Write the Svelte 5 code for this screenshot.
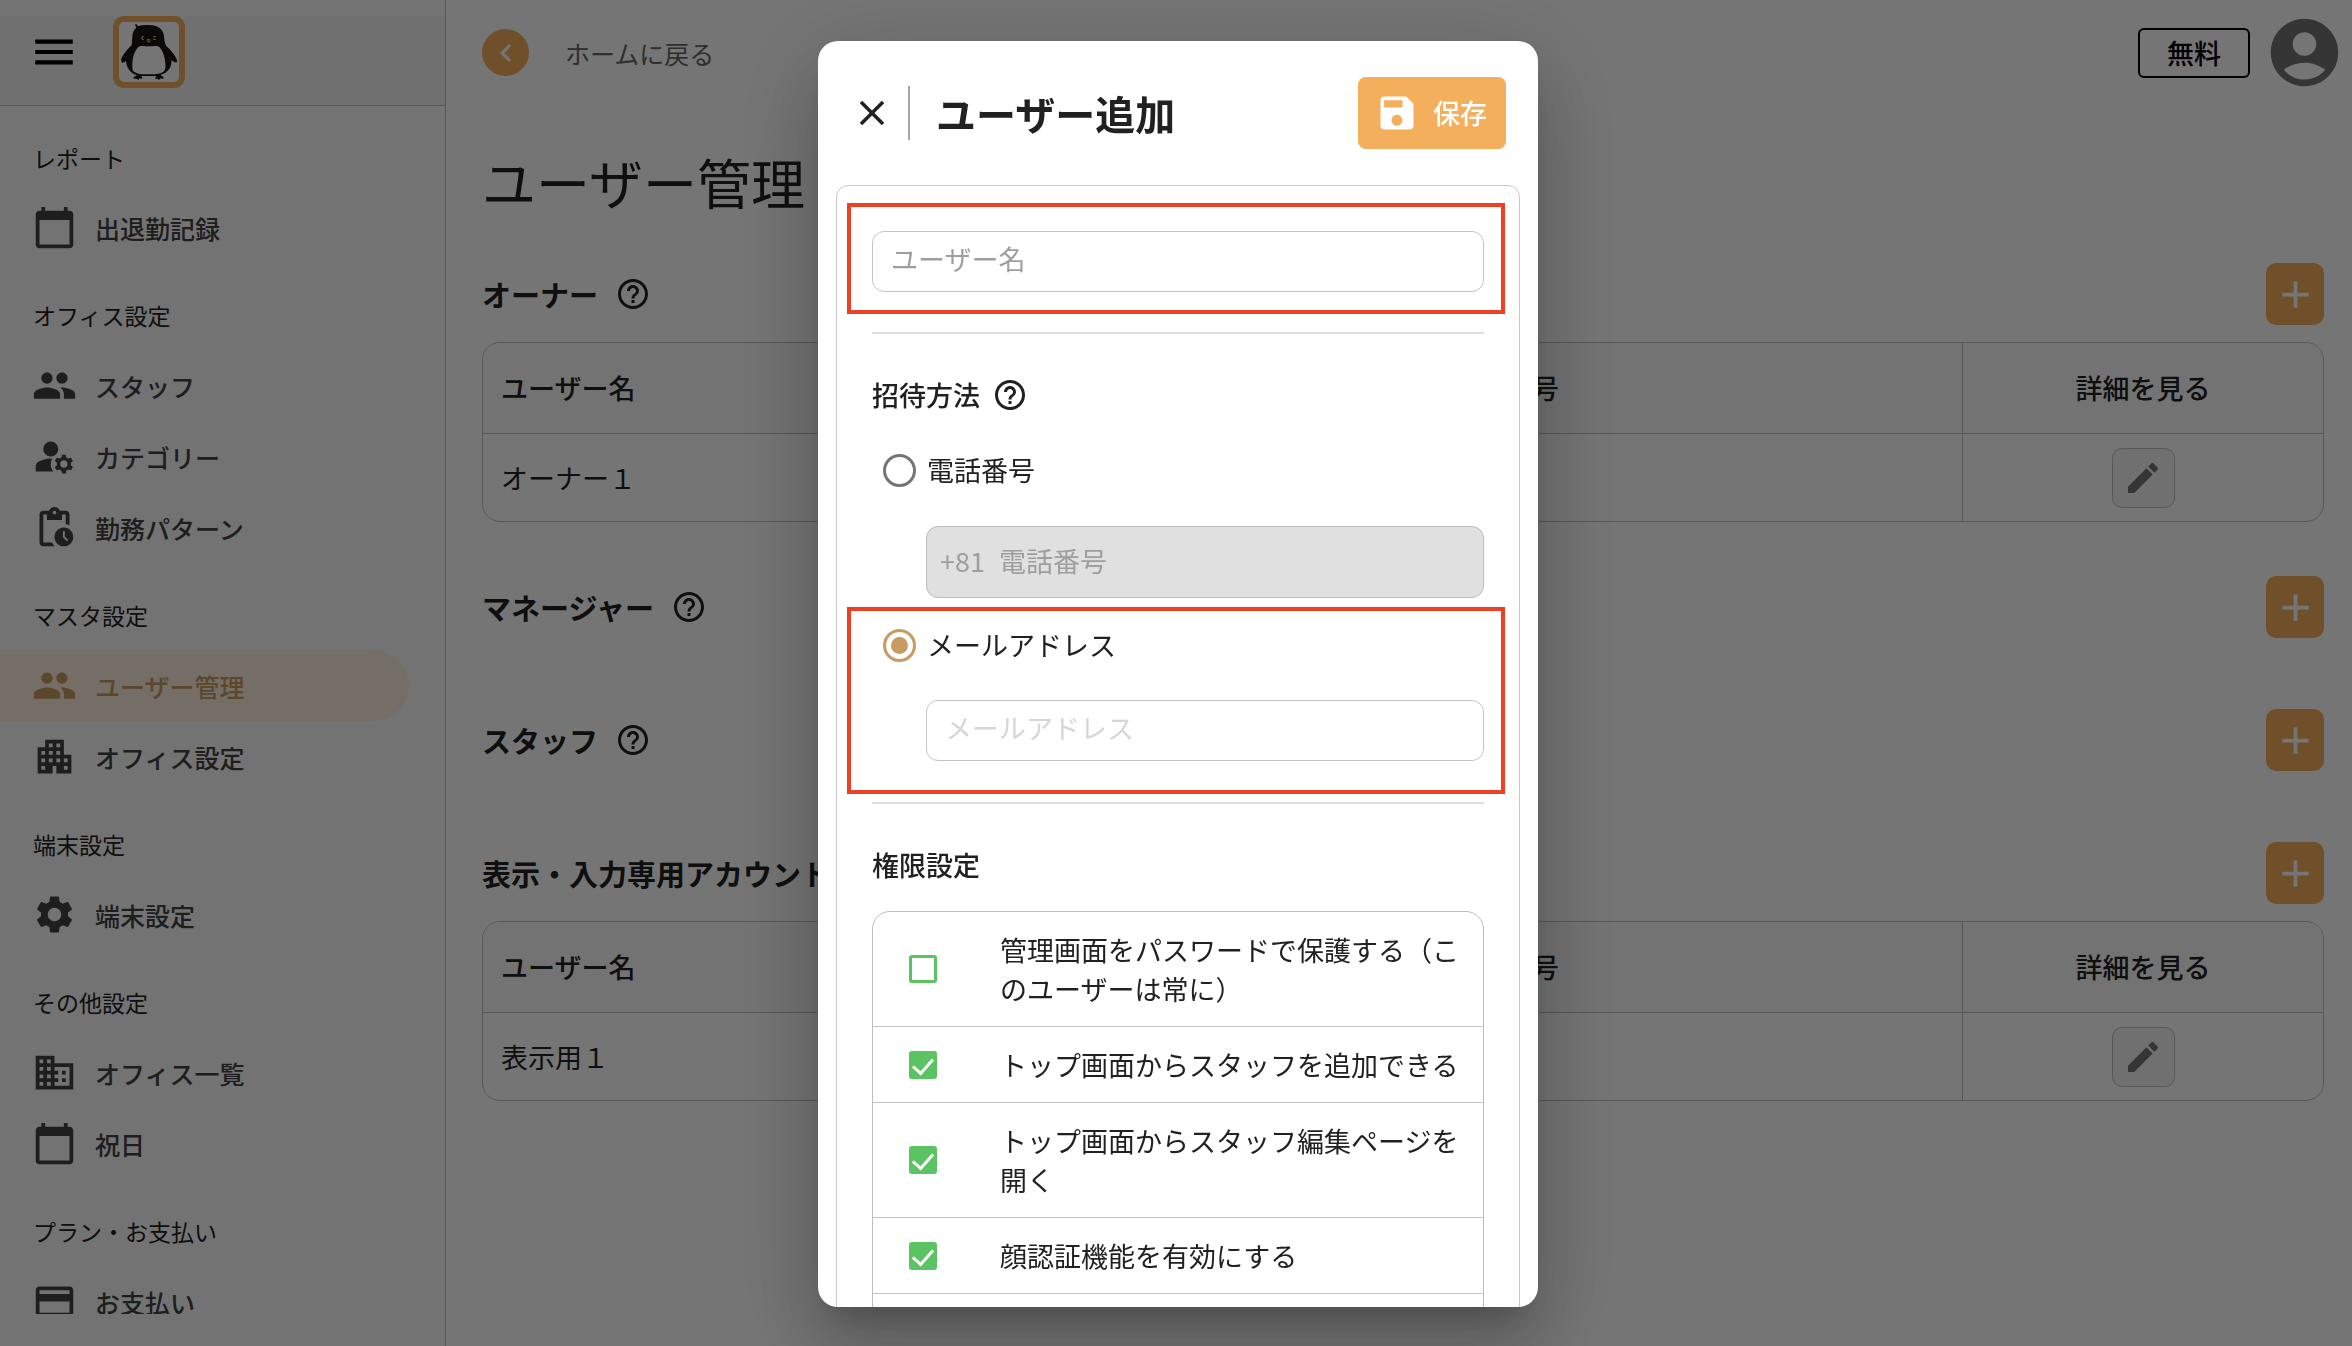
<script>
  const icons = {
    menu: 'M3 18h18v-2H3v2zm0-5h18v-2H3v2zm0-7v2h18V6H3z',
    calendar: 'M20 3h-1V1h-2v2H7V1H5v2H4c-1.1 0-2 .9-2 2v16c0 1.1.9 2 2 2h16c1.1 0 2-.9 2-2V5c0-1.1-.9-2-2-2zm0 18H4V8h16v13z',
    group: 'M16 11c1.66 0 2.99-1.34 2.99-3S17.66 5 16 5c-1.66 0-3 1.34-3 3s1.34 3 3 3zm-8 0c1.66 0 2.99-1.34 2.99-3S9.66 5 8 5C6.34 5 5 6.34 5 8s1.34 3 3 3zm0 2c-2.33 0-7 1.17-7 3.5V19h14v-2.5c0-2.33-4.67-3.5-7-3.5zm8 0c-.29 0-.62.02-.97.05 1.16.84 1.97 1.97 1.97 3.45V19h6v-2.5c0-2.33-4.67-3.5-7-3.5z',
    manage: 'M10 4a4 4 0 1 0 0 8 4 4 0 1 0 0-8zM10.67 13.02c-.22-.01-.44-.02-.67-.02-2.42 0-4.68.67-6.61 1.82-.88.52-1.39 1.5-1.39 2.53V20h9.26c-.79-1.13-1.26-2.51-1.26-4 0-1.07.25-2.07.67-2.98zM20.75 16c0-.22-.03-.42-.06-.63l1.14-1.01-1-1.73-1.45.49c-.32-.27-.68-.48-1.08-.63L18 11h-2l-.3 1.49c-.4.15-.76.36-1.08.63l-1.45-.49-1 1.73 1.14 1.01c-.03.21-.06.41-.06.63s.03.42.06.63l-1.14 1.01 1 1.73 1.45-.49c.32.27.68.48 1.08.63L16 21h2l.3-1.49c.4-.15.76-.36 1.08-.63l1.45.49 1-1.73-1.14-1.01c.03-.21.06-.41.06-.63zM17 18c-1.1 0-2-.9-2-2s.9-2 2-2 2 .9 2 2-.9 2-2 2z',
    pending: 'M17 12c-2.76 0-5 2.24-5 5s2.24 5 5 5 5-2.24 5-5-2.24-5-5-5zm1.65 7.35L16.5 17.2V14h1v2.79l1.85 1.85-.7.71zM18 3h-3.18C14.4 1.84 13.3 1 12 1s-2.4.84-2.82 2H6c-1.1 0-2 .9-2 2v15c0 1.1.9 2 2 2h6.11c-.59-.57-1.07-1.25-1.42-2H6V5h2v3h8V5h2v5.08c.71.1 1.38.31 2 .6V5c0-1.1-.9-2-2-2zm-6 2c-.55 0-1-.45-1-1s.45-1 1-1 1 .45 1 1-.45 1-1 1z',
    apartment: 'M17 11V3H7v4H3v14h8v-4h2v4h8V11h-4zM7 19H5v-2h2v2zm0-4H5v-2h2v2zm0-4H5V9h2v2zm4 4H9v-2h2v2zm0-4H9V9h2v2zm0-4H9V5h2v2zm4 8h-2v-2h2v2zm0-4h-2V9h2v2zm0-4h-2V5h2v2zm4 12h-2v-2h2v2zm0-4h-2v-2h2v2z',
    settings: 'M19.14 12.94c.04-.3.06-.61.06-.94 0-.32-.02-.64-.07-.94l2.03-1.58c.18-.14.23-.41.12-.61l-1.92-3.32c-.12-.22-.37-.29-.59-.22l-2.39.96c-.5-.38-1.03-.7-1.62-.94l-.36-2.54c-.04-.24-.24-.41-.48-.41h-3.84c-.24 0-.43.17-.47.41l-.36 2.54c-.59.24-1.13.57-1.62.94l-2.39-.96c-.22-.08-.47 0-.59.22L2.74 8.87c-.12.21-.08.47.12.61l2.03 1.58c-.05.3-.09.63-.09.94s.02.64.07.94l-2.03 1.58c-.18.14-.23.41-.12.61l1.92 3.32c.12.22.37.29.59.22l2.39-.96c.5.38 1.03.7 1.62.94l.36 2.54c.05.24.24.41.48.41h3.84c.24 0 .44-.17.47-.41l.36-2.54c.59-.24 1.13-.56 1.62-.94l2.39.96c.22.08.47 0 .59-.22l1.92-3.32c.12-.22.07-.47-.12-.61l-2.01-1.58zM12 15.6c-1.98 0-3.6-1.62-3.6-3.6s1.62-3.6 3.6-3.6 3.6 1.62 3.6 3.6-1.62 3.6-3.6 3.6z',
    business: 'M12 7V3H2v18h20V7H12zM6 19H4v-2h2v2zm0-4H4v-2h2v2zm0-4H4V9h2v2zm0-4H4V5h2v2zm4 12H8v-2h2v2zm0-4H8v-2h2v2zm0-4H8V9h2v2zm0-4H8V5h2v2zm10 12h-8v-2h2v-2h-2v-2h2v-2h-2V9h8v10zm-2-8h-2v2h2v-2zm0 4h-2v2h2v-2z',
    card: 'M20 4H4c-1.11 0-1.99.89-1.99 2L2 18c0 1.11.89 2 2 2h16c1.11 0 2-.89 2-2V6c0-1.11-.89-2-2-2zm0 14H4v-6h16v6zm0-10H4V6h16v2z',
    chevron: 'M15.41 7.41L14 6l-6 6 6 6 1.41-1.41L10.83 12z',
    account: 'M12 2C6.48 2 2 6.48 2 12s4.48 10 10 10 10-4.48 10-10S17.52 2 12 2zm0 4c1.93 0 3.5 1.57 3.5 3.5S13.93 13 12 13s-3.5-1.57-3.5-3.5S10.07 6 12 6zm0 14c-2.03 0-4.43-.82-6.14-2.88C7.55 15.8 9.68 15 12 15s4.45.8 6.14 2.12C16.43 19.18 14.03 20 12 20z',
    help: 'M11 18h2v-2h-2v2zm1-16C6.48 2 2 6.48 2 12s4.48 10 10 10 10-4.48 10-10S17.52 2 12 2zm0 18c-4.41 0-8-3.59-8-8s3.59-8 8-8 8 3.59 8 8-3.59 8-8 8zm0-14c-2.21 0-4 1.79-4 4h2c0-1.1.9-2 2-2s2 .9 2 2c0 2-3 1.75-3 5h2c0-2.25 3-2.5 3-5 0-2.21-1.79-4-4-4z',
    add: 'M19 13h-6v6h-2v-6H5v-2h6V5h2v6h6v2z',
    edit: 'M3 17.25V21h3.75L17.81 9.94l-3.75-3.75L3 17.25zM20.71 7.04c.39-.39.39-1.02 0-1.41l-2.34-2.34c-.39-.39-1.02-.39-1.41 0l-1.83 1.83 3.75 3.75 1.83-1.83z',
    close: 'M19 6.41L17.59 5 12 10.59 6.41 5 5 6.41 10.59 12 5 17.59 6.41 19 12 13.41 17.59 19 19 17.59 13.41 12z',
    save: 'M17 3H5c-1.11 0-2 .9-2 2v14c0 1.1.89 2 2 2h14c1.1 0 2-.9 2-2V7l-4-4zm-5 16c-1.66 0-3-1.34-3-3s1.34-3 3-3 3 1.34 3 3-1.34 3-3 3zm3-10H5V5h10v4z'
  };

  const nav = [
    { label: 'レポート', items: [['calendar', '出退勤記録']] },
    { label: 'オフィス設定', items: [['group', 'スタッフ'], ['manage', 'カテゴリー'], ['pending', '勤務パターン']] },
    { label: 'マスタ設定', items: [['group', 'ユーザー管理', true], ['apartment', 'オフィス設定']] },
    { label: '端末設定', items: [['settings', '端末設定']] },
    { label: 'その他設定', items: [['business', 'オフィス一覧'], ['calendar', '祝日']] },
    { label: 'プラン・お支払い', items: [['card', 'お支払い']] }
  ];

  const sections = [
    { title: 'オーナー', help: true, user: 'オーナー１' },
    { title: 'マネージャー', help: true },
    { title: 'スタッフ', help: true },
    { title: '表示・入力専用アカウント', help: false, user: '表示用１' }
  ];

  const permissions = $state([
    { text: '管理画面をパスワードで保護する（このユーザーは常に）', on: false },
    { text: 'トップ画面からスタッフを追加できる', on: true },
    { text: 'トップ画面からスタッフ編集ページを開く', on: true },
    { text: '顔認証機能を有効にする', on: true },
    { text: '', on: false }
  ]);

  let method = $state('email');
</script>

{#snippet icon(name, size)}
  <svg class="icon {size}" viewBox="0 0 24 24" aria-hidden="true"><path d={icons[name]} /></svg>
{/snippet}

<div class="app">
  <aside class="sidebar">
    <div class="brand">
      <button class="plain" aria-label="メニュー">{@render icon('menu', 's50')}</button>
      <svg class="logo" viewBox="0 0 216 216" role="img" aria-label="ペンギン">
        <rect x="9" y="9" width="198" height="198" rx="24" fill="#fff" stroke="#f4af5c" stroke-width="18" />
        <path fill="#1c1414" d="M58 62C59 48 63 40 70 35L66 26L70 24L75 31C84 27 94 27 107 27C136 27 150 40 153 60C154 75 156 84 160 90C172 101 186 117 192 132L191 140L184 138L175 133C177 150 168 163 158 170L142 177L152 184L150 189L143 187L138 192L133 188L126 188L130 180H86L88 188L80 187L76 192L70 188L62 188L62 183L72 178C56 173 41 160 39 136L27 141L24 131C30 115 45 98 56 88C57 80 57 70 58 62Z" />
        <path fill="#fff" d="M76 93C84 87 92 91 107 91C124 91 132 87 140 94C150 106 156 124 157 142C158 152 158 160 153 166C140 176 126 175 107 175C88 175 74 176 60 164C56 154 56 112 76 93Z" />
        <path fill="none" stroke="#eee" stroke-width="3" d="M92 62H88Q85 66 88 71H92M121 62H128M121 70H128" />
        <path fill="#d9bf3c" d="M100 73Q107 64 114 73L107 81Z" />
        <path stroke="#1c1414" stroke-width="2" d="M101 74H113" />
      </svg>
    </div>
    <nav>
      {#each nav as group}
        <h2>{group.label}</h2>
        {#each group.items as [glyph, text, active]}
          <a href="#{text}" class:active>{@render icon(glyph, 's45')}<span>{text}</span></a>
        {/each}
      {/each}
    </nav>
  </aside>

  <main>
    <header class="topbar">
      <a class="back" href="#home"><span class="circle">{@render icon('chevron', 's36')}</span>ホームに戻る</a>
      <button class="plan">無料</button>
      <button class="plain grey" aria-label="アカウント">{@render icon('account', 's81')}</button>
    </header>
    <h1>ユーザー管理</h1>
    {#each sections as section}
      <section>
        <div class="head">
          <h3>{section.title}</h3>
          {#if section.help}{@render icon('help', 's36')}{/if}
          <button class="add" aria-label="追加">{@render icon('add', 's45')}</button>
        </div>
        {#if section.user}
          <table>
            <thead>
              <tr><th>ユーザー名</th><th>電話番号</th><th class="detail">詳細を見る</th></tr>
            </thead>
            <tbody>
              <tr>
                <td>{section.user}</td><td></td>
                <td class="detail"><button class="edit" aria-label="編集">{@render icon('edit', 's40')}</button></td>
              </tr>
            </tbody>
          </table>
        {/if}
      </section>
    {/each}
  </main>
</div>

<div class="overlay">
  <div class="dialog" role="dialog" aria-modal="true" aria-labelledby="dialog-title">
    <header class="dialog-head">
      <button class="plain dark" aria-label="閉じる">{@render icon('close', 's42')}</button>
      <span class="rule"></span>
      <h2 id="dialog-title">ユーザー追加</h2>
      <button class="save">{@render icon('save', 's44')}保存</button>
    </header>
    <form class="panel">
      <div class="highlight name">
        <input class="field" type="text" placeholder="ユーザー名" aria-label="ユーザー名" />
      </div>
      <hr class="after-name" />
      <h4>招待方法 {@render icon('help', 's36')}</h4>
      <label class="radio"><input type="radio" name="method" value="phone" bind:group={method} />電話番号</label>
      <div class="phone">
        <span>+81</span>
        <input type="tel" placeholder="電話番号" aria-label="電話番号" disabled={method !== 'phone'} />
      </div>
      <div class="highlight mail">
        <label class="radio"><input type="radio" name="method" value="email" bind:group={method} />メールアドレス</label>
        <input class="field light" type="email" placeholder="メールアドレス" aria-label="メールアドレス" />
      </div>
      <hr class="after-mail" />
      <h4>権限設定</h4>
      <ul>
        {#each permissions as item}
          <li><label><input type="checkbox" bind:checked={item.on} /><span>{item.text}</span></label></li>
        {/each}
      </ul>
    </form>
  </div>
</div>

<style>
  :global(body) {
    font-family: "Noto Sans CJK JP", sans-serif;
    color: #212121;
    overflow: hidden;
  }
  * { box-sizing: border-box; }
  h1, h2, h3, h4, ul { margin: 0; padding: 0; }
  button, input { font: inherit; color: inherit; margin: 0; }
  button { cursor: pointer; padding: 0; border: 0; }
  a { color: inherit; text-decoration: none; }

  .icon { display: block; flex: none; fill: currentColor; }
  .s36 { width: 36px; height: 36px; }
  .s40 { width: 40px; height: 40px; }
  .s42 { width: 42px; height: 42px; }
  .s44 { width: 44px; height: 44px; }
  .s45 { width: 45px; height: 45px; }
  .s50 { width: 50px; height: 50px; }
  .s81 { width: 81px; height: 81px; }
  .plain { background: none; color: #000; }
  .plain.grey { color: #757575; }
  .plain.dark { color: #212121; }

  .app { display: flex; height: 100vh; background: #fff; }
  .sidebar {
    flex: none;
    display: flex;
    flex-direction: column;
    width: 446px;
    padding: 16px 0 32px;
    background: #fafafa;
    border-right: 1px solid #c0c0c0;
  }
  .brand {
    flex: none;
    display: flex;
    gap: 34px;
    height: 90px;
    padding-left: 29px;
    background: #f3f3f3;
    border-bottom: 1px solid #c0c0c0;
  }
  .brand .plain { height: 72px; }
  .logo { width: 72px; height: 72px; }
  nav { flex: 1; min-height: 0; overflow: hidden; }
  nav h2 {
    padding: 35px 0 17px 33px;
    font-size: 23px;
    line-height: 34px;
    font-weight: 400;
  }
  nav h2 ~ h2 { padding-bottom: 18px; }
  nav a {
    display: flex;
    align-items: center;
    gap: 18px;
    width: 409px;
    height: 71px;
    padding-left: 32px;
    border-radius: 0 36px 36px 0;
    font-size: 25px;
    font-weight: 500;
    color: #424242;
  }
  nav a.active { background: #fcefe0; color: #c99b60; }

  main { flex: 1; min-width: 0; padding: 0 28px 0 36px; }
  .topbar { display: flex; align-items: center; height: 105px; }
  .back {
    display: flex;
    align-items: center;
    gap: 36px;
    margin-right: auto;
    font-size: 25px;
    color: #666;
  }
  .circle {
    display: grid;
    place-items: center;
    width: 47px;
    height: 47px;
    border-radius: 50%;
    background: #f4af5c;
    color: #fff;
  }
  .plan {
    width: 112px;
    height: 50px;
    margin-right: 14px;
    border: 2px solid #000;
    border-radius: 6px;
    background: none;
    font-size: 27px;
    line-height: 40px;
    font-weight: 500;
    color: #000;
  }
  .topbar .grey { margin-right: -21px; }
  h1 {
    padding: 37px 0 41px;
    font-size: 54px;
    line-height: 80px;
    font-weight: 400;
  }
  section { padding-bottom: 54px; }
  .head {
    display: flex;
    align-items: center;
    gap: 17px;
    height: 62px;
    margin-bottom: 17px;
  }
  h3 { font-size: 29px; line-height: 42px; font-weight: 700; }
  .add {
    display: grid;
    place-items: center;
    width: 58px;
    height: 62px;
    margin-left: auto;
    border-radius: 10px;
    background: #f4af5c;
    color: #fff;
  }
  table {
    width: 100%;
    table-layout: fixed;
    border: 1px solid #c0c0c0;
    border-radius: 18px;
    border-spacing: 0;
    overflow: hidden;
    font-size: 27px;
    line-height: 40px;
    text-align: left;
  }
  th {
    height: 91px;
    padding: 0 18px;
    background: #fafafa;
    border-bottom: 1px solid #c0c0c0;
    font-weight: 500;
  }
  th:first-child { width: 950px; }
  td { height: 87px; padding: 0 18px; }
  .detail { width: 361px; border-left: 1px solid #c0c0c0; text-align: center; }
  .edit {
    display: inline-grid;
    place-items: center;
    width: 63px;
    height: 60px;
    border: 1px solid #c0c0c0;
    border-radius: 10px;
    background: #f5f5f5;
    color: #757575;
    vertical-align: middle;
  }

  .overlay {
    position: fixed;
    inset: 0;
    display: flex;
    justify-content: center;
    padding: 41px 0 39px 4px;
    background: rgba(0, 0, 0, 0.54);
  }
  .dialog {
    width: 720px;
    overflow: hidden;
    background: #fff;
    border-radius: 20px;
    box-shadow:
      0 22px 30px -14px rgba(0, 0, 0, 0.2),
      0 48px 76px 6px rgba(0, 0, 0, 0.14),
      0 18px 92px 16px rgba(0, 0, 0, 0.12);
  }
  .dialog-head {
    display: flex;
    align-items: center;
    height: 144px;
    padding: 0 32px 0 33px;
  }
  .rule { width: 2px; height: 54px; margin: 0 26px 0 15px; background: #a6a6a6; }
  .dialog-head h2 { font-size: 40px; line-height: 58px; font-weight: 700; }
  .save {
    display: flex;
    align-items: center;
    gap: 14px;
    width: 148px;
    height: 72px;
    margin-left: auto;
    padding-left: 17px;
    border-radius: 8px;
    background: #f4af5c;
    color: #fff;
    font-size: 27px;
    line-height: 40px;
    font-weight: 500;
    white-space: nowrap;
  }
  .panel {
    margin: 0 18px;
    padding: 17px 35px 35px;
    border: 1px solid #c8c8c8;
    border-radius: 12px;
    font-size: 27px;
    line-height: 40px;
  }
  .highlight {
    margin: 0 -21px 0 -25px;
    border: 4px solid #ed4024;
  }
  .highlight.name { padding: 24px 17px 18px 21px; }
  .highlight.mail { padding: 14px 17px 29px 21px; margin-top: 9px; }
  .field {
    display: block;
    width: 100%;
    height: 61px;
    padding: 0 18px 7px;
    border: 1px solid #c4c4c4;
    border-radius: 12px;
    background: #fff;
    outline: 0;
  }
  .field::placeholder { color: #9e9e9e; opacity: 1; }
  .field.light { width: auto; min-width: calc(100% - 54px); margin: 35px 0 0 54px; }
  .field.light::placeholder { color: #d6d6d6; }
  hr { height: 2px; margin: 0; border: 0; background: #e0e0e0; }
  .after-name { margin-top: 18px; }
  .after-mail { margin-top: 8px; }
  h4 {
    display: flex;
    align-items: center;
    gap: 12px;
    margin-top: 41px;
    font-size: 27px;
    line-height: 40px;
    font-weight: 500;
  }
  .radio { display: flex; align-items: center; gap: 11px; height: 40px; padding-left: 11px; }
  .panel > .radio { margin-top: 35px; }
  .radio input {
    appearance: none;
    flex: none;
    display: grid;
    place-items: center;
    width: 33px;
    height: 33px;
    border: 3px solid #757575;
    border-radius: 50%;
  }
  .radio input:checked { border-color: #c99b60; }
  .radio input:checked::after {
    content: "";
    width: 17px;
    height: 17px;
    border-radius: 50%;
    background: #c99b60;
  }
  .phone {
    display: flex;
    align-items: center;
    gap: 14px;
    height: 72px;
    margin: 36px 0 0 54px;
    padding: 0 13px 3px;
    border: 1px solid #bdbdbd;
    border-radius: 12px;
    background: #e0e0e0;
    color: #9e9e9e;
  }
  .phone input { flex: 1; min-width: 0; height: 40px; padding: 0; border: 0; background: none; outline: 0; }
  .phone input::placeholder { color: #9e9e9e; opacity: 1; }
  ul {
    margin-top: 26px;
    list-style: none;
    border: 1px solid #bdbdbd;
    border-radius: 18px;
    line-height: 39px;
  }
  li { border-bottom: 1px solid #c4c4c4; }
  li:last-child { border: 0; }
  li label { display: flex; align-items: center; gap: 63px; min-height: 75px; padding: 18px 24px 18px 36px; }
  li input {
    appearance: none;
    flex: none;
    display: grid;
    justify-items: center;
    width: 28px;
    height: 28px;
    border: 3px solid #5ac462;
    border-radius: 3px;
  }
  li input:checked { background: #5ac462; }
  li input:checked::after {
    content: "";
    width: 9px;
    height: 17px;
    border: solid #fff;
    border-width: 0 3px 3px 0;
    transform: rotate(42deg);
  }
</style>
